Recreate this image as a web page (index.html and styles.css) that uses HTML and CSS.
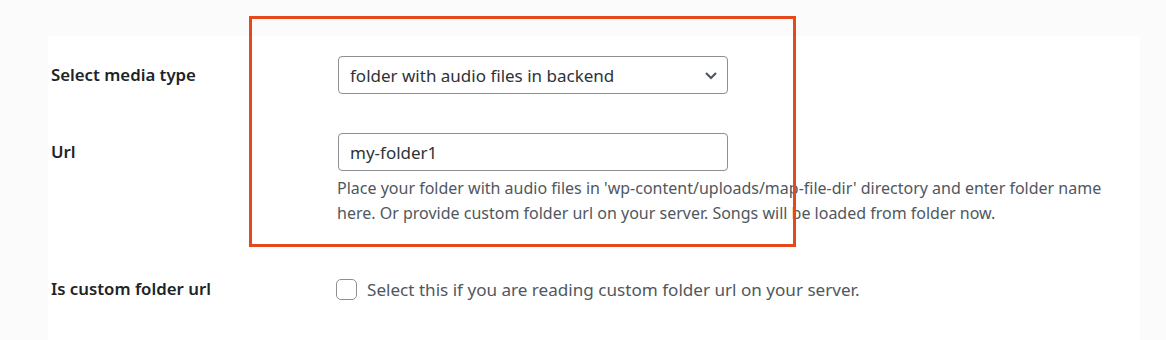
FILE: index.html
```html
<!DOCTYPE html>
<html lang="en">
<head>
    <meta charset="UTF-8">
    <meta name="viewport" content="width=device-width, initial-scale=1.0">
    <title>Playlist Settings</title>
    <link rel="stylesheet" href="styles.css">
</head>
<body>

<div class="panel">
    <!-- Media type -->
    <div class="row row-first">
        <label class="row-label" for="media_type">Select media type</label>
        <div class="row-field">
            <div class="select-wrap">
                <select id="media_type" name="media_type">
                    <option>folder with audio files in backend</option>
                </select>
                <svg class="chevron" width="14" height="9" viewBox="0 0 14 9">
                    <path d="M2 2l5 5 5-5" fill="none" stroke="#50575e" stroke-width="2.2"/>
                </svg>
            </div>
        </div>
    </div>

    <!-- Folder url -->
    <div class="row">
        <label class="row-label" for="folder_url">Url</label>
        <div class="row-field">
            <input type="text" id="folder_url" name="folder_url" value="my-folder1">
            <p class="description">Place your folder with audio files in 'wp-content/uploads/map-file-dir' directory and enter folder name here. Or provide custom folder url on your server. Songs will be loaded from folder now.</p>
        </div>
    </div>

    <!-- Custom folder -->
    <div class="row row-last">
        <div class="row-label">Is custom folder url</div>
        <div class="row-field">
            <label class="check"><input type="checkbox" name="custom_folder"> Select this if you are reading custom folder url on your server.</label>
        </div>
    </div>

    <div class="highlight"></div>
</div>

</body>
</html>
```

FILE: styles.css
```css
body { margin: 0; background-color: #fbfbfb; font-family: "Noto Sans", "Open Sans", sans-serif; color: #1d2327; }
.panel { position: relative; margin: 36px 26px 0 48px; padding-left: 3px; background-color: #fff; height: 304px; }
.row { display: grid; grid-template-columns: 287px 390px; padding: 20px 0; }
.row-first { padding-bottom: 19px; }
.row-last { padding-top: 33px; }
.row-label { font-size: 16.8px; font-weight: 600; line-height: 38px; color: #1d2327; }
.row-last .row-label { line-height: 20px; }
.select-wrap { position: relative; }
.select-wrap select, .row-field input[type="text"] { width: 100%; height: 38px; box-sizing: border-box; border: 1px solid #8c8f94; border-radius: 4px; background: #fff; font-family: inherit; font-size: 17px; color: #2c3338; padding: 0 11px; margin: 0; }
.select-wrap select { appearance: none; -webkit-appearance: none; }
.chevron { position: absolute; right: 10px; top: 15px; pointer-events: none; }
.description { margin: 5px 0 0 -1px; width: 785px; font-size: 16px; line-height: 25px; color: #50575e; }
.check { display: flex; align-items: center; gap: 10px; margin-left: -2px; font-size: 17.1px; line-height: 20px; color: #50575e; white-space: nowrap; }
.check input { appearance: none; -webkit-appearance: none; flex-shrink: 0; width: 21px; height: 21px; margin: 0; border: 1px solid #8c8f94; border-radius: 5px; background: #fff; }
.highlight { position: absolute; left: 201px; top: -20px; width: 541px; height: 225px; border: 3px solid #e5481b; }
```
